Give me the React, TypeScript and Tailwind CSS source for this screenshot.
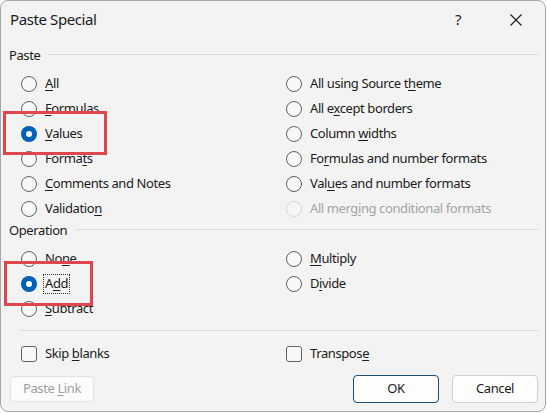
import React from "react";

const F = { fontFamily: '"Noto Sans", "Segoe UI", sans-serif' };

function U({ t, i }: { t: string; i: number }) {
  return (
    <>
      {t.slice(0, i)}
      <span className="underline underline-offset-2">{t[i]}</span>
      {t.slice(i + 1)}
    </>
  );
}

function Radio({ checked, disabled }: { checked?: boolean; disabled?: boolean }) {
  if (checked)
    return (
      <span className="w-[16px] h-[16px] rounded-full bg-[#005fb8] flex items-center justify-center shrink-0">
        <span className="w-[6px] h-[6px] rounded-full bg-white" />
      </span>
    );
  return (
    <span
      className={
        "w-[16px] h-[16px] rounded-full border shrink-0 " +
        (disabled ? "border-[#d6d6d6] bg-[#f6f6f6]" : "border-[#626262] bg-[#f8f8f8]")
      }
    />
  );
}

function Row({
  label,
  idx,
  checked,
  disabled,
  focus,
}: {
  label: string;
  idx: number;
  checked?: boolean;
  disabled?: boolean;
  focus?: boolean;
}) {
  return (
    <div className="h-[25px] flex items-center gap-[8px]">
      <Radio checked={checked} disabled={disabled} />
      {focus ? (
        <span className="border border-dotted border-[#333] -ml-[2px] px-[1px] h-[20px] flex items-center">
          <U t={label} i={idx} />
        </span>
      ) : (
        <span className={disabled ? "text-[#a3a3a3]" : ""}>
          <U t={label} i={idx} />
        </span>
      )}
    </div>
  );
}

function Check({ label, idx }: { label: string; idx: number }) {
  return (
    <div className="h-[25px] flex items-center gap-[8px]">
      <span className="w-[16px] h-[16px] rounded-[3px] border border-[#626262] bg-[#f8f8f8] shrink-0" />
      <span>
        <U t={label} i={idx} />
      </span>
    </div>
  );
}

export default function App() {
  return (
    <div className="w-[547px] h-[413px] bg-white tracking-[-0.4px]" style={F}>
      <div className="relative w-[546px] h-[412px] border border-[#a8a8a8] rounded-[8px] bg-[#f3f3f3] overflow-hidden text-[13px] text-[#1b1b1b] flex flex-col">
        {/* title */}
        <div className="h-[43px] flex items-center shrink-0">
          <span className="ml-[9px] text-[15px] -mt-[6px]">Paste Special</span>
          <span className="ml-auto text-[15px] -mt-[6px]">?</span>
          <svg className="ml-[49px] mr-[23px] -mt-[6px]" width="12" height="12" viewBox="0 0 12 12">
            <path d="M0.5 0.5 L11.5 11.5 M11.5 0.5 L0.5 11.5" stroke="#1b1b1b" strokeWidth="1.1" />
          </svg>
        </div>
        {/* Paste header */}
        <div className="h-[24px] flex items-center shrink-0">
          <span className="ml-[8px]">Paste</span>
          <span className="ml-[8px] mr-[7px] flex-1 h-px bg-[#dcdcdc] -mt-[3px]" />
        </div>
        <div className="mt-[3px] grid grid-cols-[265px_1fr] pl-[20px] shrink-0">
          <div className="flex flex-col">
            <Row label="All" idx={0} />
            <Row label="Formulas" idx={0} />
            <Row label="Values" idx={0} checked />
            <Row label="Formats" idx={5} />
            <Row label="Comments and Notes" idx={0} />
            <Row label="Validation" idx={9} />
          </div>
          <div className="flex flex-col">
            <Row label="All using Source theme" idx={18} />
            <Row label="All except borders" idx={5} />
            <Row label="Column widths" idx={7} />
            <Row label="Formulas and number formats" idx={2} />
            <Row label="Values and number formats" idx={3} />
            <Row label="All merging conditional formats" idx={8} disabled />
          </div>
        </div>
        {/* Operation header */}
        <div className="h-[20px] flex items-center shrink-0">
          <span className="ml-[8px]">Operation</span>
          <span className="ml-[9px] mr-[7px] flex-1 h-px bg-[#dcdcdc] -mt-[3px]" />
        </div>
        <div className="mt-[5px] grid grid-cols-[265px_1fr] pl-[20px] shrink-0">
          <div className="flex flex-col">
            <Row label="None" idx={2} />
            <Row label="Add" idx={1} checked focus />
            <Row label="Subtract" idx={0} />
          </div>
          <div className="flex flex-col">
            <Row label="Multiply" idx={0} />
            <Row label="Divide" idx={1} />
          </div>
        </div>
        <div className="mt-[9px] ml-[19px] mr-[7px] h-px bg-[#dcdcdc] shrink-0" />
        <div className="mt-[10px] grid grid-cols-[265px_1fr] pl-[20px] shrink-0">
          <Check label="Skip blanks" idx={5} />
          <Check label="Transpose" idx={8} />
        </div>
        <div className="mt-[9px] h-[28px] flex items-center shrink-0">
          <button className="ml-[9px] w-[84px] h-[26px] rounded-[4px] border border-[#e2e2e2] bg-[#fbfbfb] text-[#a0a0a0] text-[13px]">
            Paste <U t="Link" i={0} />
          </button>
          <button className="ml-auto w-[86px] h-[28px] rounded-[4px] border border-[#1f4e74] bg-[#fdfdfd] text-[13px]">
            OK
          </button>
          <button className="ml-[13px] mr-[7px] w-[86px] h-[28px] rounded-[4px] border border-[#d0d0d0] bg-[#fdfdfd] text-[13px]">
            Cancel
          </button>
        </div>
        {/* annotation boxes */}
        <div className="absolute left-[2px] top-[110px] w-[104px] h-[44px] border-[3px] border-[#e0474c]" />
        <div className="absolute left-[3px] top-[260px] w-[89px] h-[45px] border-[3px] border-[#e0474c]" />
      </div>
    </div>
  );
}
